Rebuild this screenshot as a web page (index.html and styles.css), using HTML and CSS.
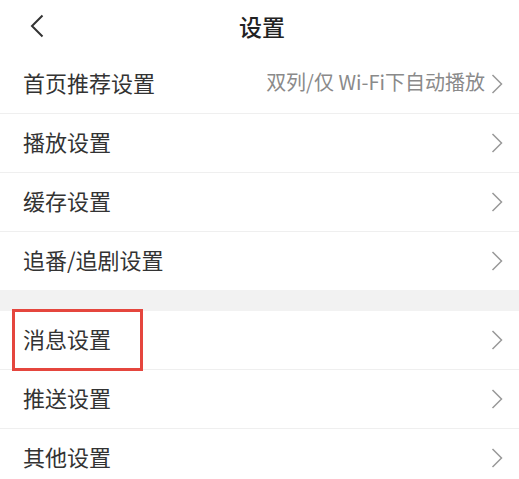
FILE: index.html
```html
<!DOCTYPE html>
<html lang="zh">
<head>
<meta charset="utf-8">
<link rel="stylesheet" href="styles.css">
</head>
<body>
<div class="page">
  <header class="nav">
    <span class="back">
      <svg width="16" height="24" viewBox="0 0 16 24"><path d="M13.5 1.5 L3 12 L13.5 22.5" fill="none" stroke="#333" stroke-width="2"/></svg>
    </span>
    <h1 class="title">设置</h1>
  </header>
  <div class="group">
    <div class="row"><span class="label">首页推荐设置</span><span class="value">双列/仅 Wi-Fi下自动播放</span><span class="arrow"><svg width="12" height="20" viewBox="0 0 12 20"><path d="M1.5 1 L10.5 10 L1.5 19" fill="none" stroke="#999" stroke-width="1.5"/></svg></span></div>
    <div class="row"><span class="label">播放设置</span><span class="arrow"><svg width="12" height="20" viewBox="0 0 12 20"><path d="M1.5 1 L10.5 10 L1.5 19" fill="none" stroke="#999" stroke-width="1.5"/></svg></span></div>
    <div class="row"><span class="label">缓存设置</span><span class="arrow"><svg width="12" height="20" viewBox="0 0 12 20"><path d="M1.5 1 L10.5 10 L1.5 19" fill="none" stroke="#999" stroke-width="1.5"/></svg></span></div>
    <div class="row last"><span class="label">追番/追剧设置</span><span class="arrow"><svg width="12" height="20" viewBox="0 0 12 20"><path d="M1.5 1 L10.5 10 L1.5 19" fill="none" stroke="#999" stroke-width="1.5"/></svg></span></div>
  </div>
  <div class="gap"></div>
  <div class="group">
    <div class="row highlighted"><span class="label">消息设置</span><span class="arrow"><svg width="12" height="20" viewBox="0 0 12 20"><path d="M1.5 1 L10.5 10 L1.5 19" fill="none" stroke="#999" stroke-width="1.5"/></svg></span><span class="mark"></span></div>
    <div class="row"><span class="label">推送设置</span><span class="arrow"><svg width="12" height="20" viewBox="0 0 12 20"><path d="M1.5 1 L10.5 10 L1.5 19" fill="none" stroke="#999" stroke-width="1.5"/></svg></span></div>
    <div class="row last"><span class="label">其他设置</span><span class="arrow"><svg width="12" height="20" viewBox="0 0 12 20"><path d="M1.5 1 L10.5 10 L1.5 19" fill="none" stroke="#999" stroke-width="1.5"/></svg></span></div>
  </div>
</div>
</body>
</html>
```
FILE: styles.css
```css
html, body {
  margin: 0;
  padding: 0;
  background: #fff;
}
.page {
  width: 519px;
  font-family: "Noto Sans CJK SC", "Noto Sans", sans-serif;
  color: #333;
}
.nav {
  height: 55px;
  display: flex;
  align-items: center;
  justify-content: center;
  position: relative;
}
.back {
  position: absolute;
  left: 29px;
  top: 14px;
  display: flex;
}
.title {
  margin: 0;
  font-size: 23px;
  font-weight: 500;
  color: #222;
  line-height: 1;
  padding-left: 5px;
  margin-top: -3px;
}
.row {
  height: 58px;
  display: flex;
  align-items: center;
  padding: 0 16px 0 23px;
  border-bottom: 1px solid #efefef;
  position: relative;
}
.row.last {
  border-bottom: none;
}
.label {
  font-size: 22px;
  line-height: 1;
  flex: 1;
  color: #333;
  margin-top: -4px;
}
.value {
  font-size: 20px;
  color: #8a8a8a;
  line-height: 1;
  margin-right: 6px;
  margin-top: -4px;
}
.arrow {
  display: flex;
  margin-top: 0;
}
.gap {
  height: 21px;
  background: #f2f2f2;
}
.mark {
  position: absolute;
  left: 12px;
  top: -2px;
  width: 125px;
  height: 56px;
  border: 3px solid #e5463e;
}
```
